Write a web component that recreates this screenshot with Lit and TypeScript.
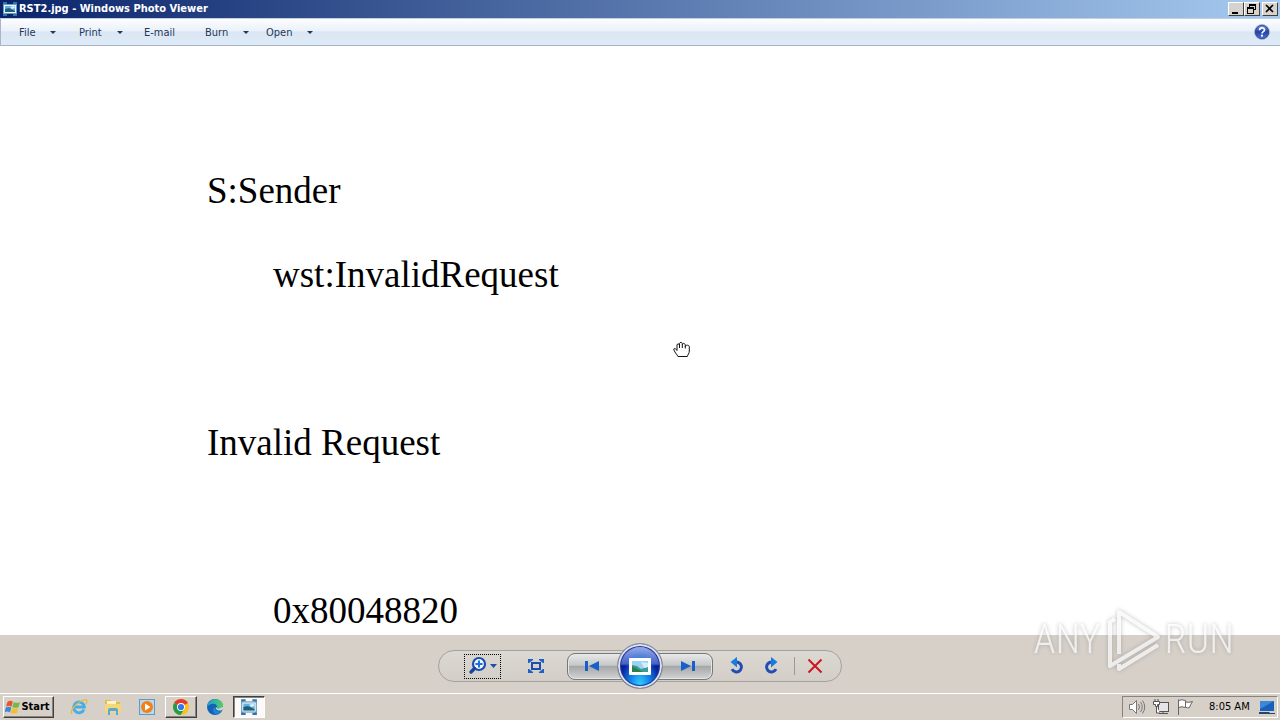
import { LitElement, html, css, svg } from "lit";
import { customElement } from "lit/decorators.js";

const photo = svg`<path d="M1 1h4v2H3v2H1zM15 1h-4v2h2v2h2zM1 15h4v-2H3v-2H1zM15 15h-4v-2h2v-2h2z" fill="#2f74ad"/>
  <rect x="1.500" y="3.500" width="13" height="9" fill="#eaf4fa" stroke="#6d9dbd"/>
  <rect x="3" y="5" width="10" height="6" fill="#5eb2e0"/><path d="M3 8l4-1 2 1 4 2v1H3z" fill="#215e7c"/><path d="M8 6l4-1 1 2-3 1z" fill="#d8f2fc"/>`;

const icons = {
  photo: svg`<svg width="16" height="16" viewBox="0 0 16 16">${photo}</svg>`,
  photoLarge: svg`<svg width="18" height="18" viewBox="0 0 16 16">${photo}</svg>`,
  minimize: svg`<svg width="14" height="12" viewBox="0 0 14 12"><path d="M3 9h6v2H3z"/></svg>`,
  restore: svg`<svg width="14" height="12" viewBox="0 0 14 12"><path d="M4 1h7v6H9V6h1V3H5v1H4z"/><path d="M2 4h7v7H2zM3 6v4h5V6z" fill-rule="evenodd"/></svg>`,
  close: svg`<svg width="14" height="12" viewBox="0 0 14 12"><path d="M3 2l7 7M10 2L3 9" stroke="#000" stroke-width="1.6"/></svg>`,
  help: svg`<svg width="18" height="18" viewBox="0 0 18 18"><defs><linearGradient id="h" x2="0" y2="1"><stop stop-color="#7a9be8"/><stop offset=".5" stop-color="#2440a8"/><stop offset="1" stop-color="#4a80dc"/></linearGradient></defs>
    <circle cx="9" cy="9" r="7.5" fill="url(#h)" stroke="#b4bdcf"/><circle cx="9" cy="9" r="6.7" fill="none" stroke="#33458f" stroke-width=".8"/>
    <path d="M6.600 7.200c0-3 4.900-3 4.900-.2C11.500 8.700 9 8.500 9 10.500" fill="none" stroke="#fff" stroke-width="1.700"/><circle cx="9" cy="12.700" r="1.100" fill="#fff"/></svg>`,
  zoom: svg`<svg width="30" height="20" viewBox="0 0 30 20"><circle cx="11" cy="8" r="6" fill="#eef5fc" stroke="#1b4fae" stroke-width="2.200"/><path d="M6.500 12.500L3 16" stroke="#16479f" stroke-width="3.400" stroke-linecap="round"/><path d="M11 4.500v7M7.500 8h7" stroke="#1672dc" stroke-width="2"/><path d="M22 8h7l-3.500 4z" fill="#1c4fae"/></svg>`,
  fit: svg`<svg width="16" height="14" viewBox="0 0 16 14"><rect x="4" y="4" width="8" height="6" fill="none" stroke="#1b4fae" stroke-width="2"/><path d="M0 0h5v1L1 4H0zM16 0h-5v1l4 3h1zM0 14h5v-1l-4-3H0zM16 14h-5v-1l4-3h1z" fill="#1c62c4"/></svg>`,
  prev: svg`<svg width="16" height="12" viewBox="0 0 16 12"><path d="M1 1h3v10H1zM15 1v10L5 6z" fill="#1760c8"/></svg>`,
  next: svg`<svg width="16" height="12" viewBox="0 0 16 12"><path d="M12 1h3v10h-3zM1 1v10l10-5z" fill="#1760c8"/></svg>`,
  show: svg`<svg width="22" height="18" viewBox="0 0 22 18"><rect width="22" height="17" y="1" rx="1" fill="#fff"/><rect x="3" y="4" width="16" height="11" fill="#9bd3f2"/><path d="M3 8l5 1 4 3 7-2v5H3z" fill="#3b9b9c"/><path d="M3 9l9 5 2 1H3z" fill="#2f8047"/><path d="M12 5l7 1v4l-4 1z" fill="#d2effb"/></svg>`,
  undo: svg`<svg width="16" height="18" viewBox="0 0 16 18"><path d="M6 5.200h3a5 5 0 1 1-6 7" fill="none" stroke="#214db0" stroke-width="3"/><path d="M8 0v10.500L1.500 5z" fill="#187be0"/></svg>`,
  redo: svg`<svg width="16" height="18" viewBox="0 0 16 18"><path d="M10 5.200H7a5 5 0 1 0 6 7" fill="none" stroke="#214db0" stroke-width="3"/><path d="M8 0v10.500L14.500 5z" fill="#187be0"/></svg>`,
  del: svg`<svg width="16" height="16" viewBox="0 0 16 16"><path d="M1.500 1.500l13 13M14.500 1.500l-13 13" stroke="#cc1622" stroke-width="2"/></svg>`,
  windows: svg`<svg width="16" height="16" viewBox="0 0 16 16"><path d="M2.500 3C4.500 1 6 1.500 7.800 2.600L6.500 7.700C4.500 6.300 3 6.500 1 7.500z" fill="#e5532b"/><path d="M8.700 3c2 1.300 4 1 6.300 0l-1.400 5c-2 1-4 1.300-6.200 0z" fill="#75b843"/><path d="M.9 8.400c2-1 3.500-1 5.400.2L5 13.500c-2-1.300-3.500-1.200-5.400-.2z" fill="#3d86d8"/><path d="M7.200 9c2 1.300 4 1 6.200 0L12 14c-2.200 1-4.200 1-6.200-.2z" fill="#f5bf2c"/></svg>`,
  ie: svg`<svg width="18" height="18" viewBox="0 0 18 18"><path d="M14 11.500a5.400 5.400 0 1 1 .4-2.500H5" fill="none" stroke="#43aee8" stroke-width="2.800"/><path d="M2 16C-1 13 7 4 14 2c4-1 3 2 2 4" fill="none" stroke="#e8b83f" stroke-width="1.300"/></svg>`,
  folder: svg`<svg width="18" height="18" viewBox="0 0 18 18"><path d="M1 2h6l1 2h8v9H1z" fill="#e5bb4c"/><path d="M3 3h9v3H3z" fill="#fff4c7"/><path d="M1 6h16v9H1z" fill="#f3d778"/><path d="M4 17v-5q0-2 2-2h6q2 0 2 2v5h-2v-4H6v4z" fill="#58a9d8"/></svg>`,
  media: svg`<svg width="18" height="18" viewBox="0 0 18 18"><rect x="1.500" y="1.500" width="15" height="15" fill="#b9d8ef" stroke="#5d9bc9"/><circle cx="9" cy="9" r="6" fill="#f18116"/><path d="M7 5.500v7L12.500 9z" fill="#fff"/></svg>`,
  chrome: svg`<svg width="18" height="18" viewBox="0 0 18 18"><circle cx="9" cy="9" r="8" fill="#fbc116"/><path d="M9 9L2.100 5A8 8 0 0 1 15.900 5z" fill="#e33b2e"/><path d="M9 9L2.100 5A8 8 0 0 0 8.500 17L13 10z" fill="#249b4b"/><circle cx="9" cy="9" r="4" fill="#fff"/><circle cx="9" cy="9" r="3.100" fill="#3478e5"/></svg>`,
  edge: svg`<svg width="18" height="18" viewBox="0 0 18 18"><defs><linearGradient id="e"><stop stop-color="#1c9bd8"/><stop offset="1" stop-color="#55cf62"/></linearGradient></defs><circle cx="9" cy="9" r="8" fill="#1262b5"/><path d="M1 9C2-1 17-1 17 8c0 4-5 4-6 2 1-5-6-6-10-1z" fill="url(#e)"/><path d="M9 9c0 4 4 5 7 3.500-1 2-3 3.500-5 4-5-1-5-6-2-7.500z" fill="#1b86cf"/><path d="M10 9c-1 3 3 4.500 6 3l2-2-2-1c-2 2-4 2-5 1z" fill="#d6d3ce"/></svg>`,
  sound: svg`<svg width="18" height="18" viewBox="0 0 18 18"><path d="M1.500 6.500h3l4-4v13l-4-4h-3z" fill="#fff" stroke="#777"/><path d="M10.500 6q2 3 0 6M12.500 4q3.500 5 0 10M14.500 2.500q4.500 6.500 0 13" fill="none" stroke="#777"/></svg>`,
  network: svg`<svg width="18" height="18" viewBox="0 0 18 18"><rect x="6.500" y="4.500" width="10" height="9" fill="#e5e5e5" stroke="#555"/><path d="M7 15.500h9M11 14v2" stroke="#555"/><path d="M1.500 3.500h6v3h-2v2h-2v-2h-2zM3 1v2M6 1v2M4.500 8v7H8" fill="#fff" stroke="#555"/></svg>`,
  flag: svg`<svg width="18" height="18" viewBox="0 0 18 18"><path d="M2.500 17V1.500M2.500 2.500q3.500-1.500 7 0v7q-3.500-1.500-7 0zM9.500 4q3 1 7-.5-2 3-3 6-2 1-4-.5" fill="#fff" stroke="#666"/></svg>`,
  desktop: svg`<svg width="16" height="16" viewBox="0 0 16 16"><path d="M1 2h14v10H1z" fill="#1761bd"/><path d="M1 2h14L1 10z" fill="#3b87d9"/><path d="M0 13h10l1 1h5v1H0z" fill="#284565"/></svg>`,
};

@customElement("app-root")
export class AppRoot extends LitElement {
  static styles = css`
    :host { display: flex; flex-direction: column; height: 100vh; position: relative; overflow: hidden;
      font: 11px/14px "DejaVu Sans Condensed", "DejaVu Sans", sans-serif; color: #000; background: #d6d0c9; }
    * { box-sizing: border-box; }
    button { font: inherit; color: inherit; background: none; border: 0; padding: 0; margin: 0; display: flex; align-items: center; justify-content: center; }
    svg { display: block; flex: none; }
    .title { display: flex; align-items: center; height: 19px; flex: none; padding: 0 2px; gap: 1px; color: #fff;
      background: linear-gradient(90deg, #0a246a, #a6caf0); border-bottom: 1px solid #c5d0df; }
    .title h1 { flex: 1; margin: 0; font: inherit; font-weight: bold; }
    .caption { display: flex; }
    .caption button { width: 16px; height: 14px; color: #000; background: #d6d3ce; border: 1px solid; border-color: #fff #404040 #404040 #fff; }
    .caption button:last-child { margin-left: 2px; }
    .menu { display: grid; grid-template-columns: 60px 65px 61px 61px 1fr auto; flex: none; height: 27px; padding: 0 9px 0 18px; align-items: center; color: #1e395b;
      border-left: 1px solid #a9b5cb; border-bottom: 1px solid #a5b3cc;
      background: linear-gradient(#fcfdff, #eaf1fa 45%, #dbe6f4 50%, #e0ebf8); }
    .item { justify-content: flex-start; gap: 15px; padding-top: 1px; }
    .item::after { content: ""; border: 3px solid transparent; border-top-color: #1e395b; border-bottom: 0; }
    .item.mail::after { display: none; }
    .canvas { flex: 1; min-height: 0; overflow: hidden; background: #fff; position: relative; }
    .canvas pre { margin: 0; padding: 124px 0 0 207px; font: 37px/42px "Liberation Serif", serif; }
    .indent { padding-left: 66px; }
    .hand { position: absolute; left: 673px; top: 295px; }
    .controls { flex: none; height: 58px; display: flex; justify-content: center; align-items: center; padding-top: 4px; background: #d6d0c9; }
    .pill { display: flex; align-items: center; width: 404px; height: 32px; padding-left: 25px; border: 1px solid #a5a29d; border-radius: 16px; background: linear-gradient(#dcd8d2, #d3cec7); }
    .zoom { width: 37px; height: 25px; border: 1px dotted #000; }
    .fit { width: 40px; height: 28px; margin: 0 11px 0 15px; }
    .nav { display: flex; align-items: center; width: 146px; margin-right: 7px; }
    .step { width: 60px; height: 27px; border: 1px solid #77787b; background: linear-gradient(#e9e9e9, #c6c7c8 45%, #a5a7aa 50%, #d4d4d3); box-shadow: inset 0 0 0 1px #e6e6e6; }
    .prev { border-radius: 8px 0 0 8px; padding-right: 10px; }
    .next { border-radius: 0 8px 8px 0; padding-left: 10px; }
    .show { position: relative; flex: none; width: 46px; height: 46px; margin: 0 -10px; border-radius: 50%; border: 1px solid #898b91;
      background: radial-gradient(ellipse at 50% 100%, #34dcff 0, #1488ea 30%, transparent 60%), linear-gradient(#a3b7ec, #4462c8 45%, #0a1c96 50%, #0a4fd0);
      box-shadow: inset 0 0 0 2px #dce1ec, inset 0 0 0 3px #22389b; }
    .tool { width: 34px; height: 28px; }
    .sep { width: 1px; height: 18px; margin: 0 3px 0 6px; background: #9c9993; }
    .taskbar { flex: none; height: 27px; display: flex; align-items: center; padding: 0 2px 0 3px; background: #d6d0c9; border-top: 1px solid #fff; }
    .start { width: 51px; height: 22px; margin-right: 9px; padding-right: 2px; font-weight: bold; }
    .raised { border: 1px solid; border-color: #fff #404040 #404040 #fff; box-shadow: inset -1px -1px #87847e; }
    .quick { display: flex; gap: 2px; }
    .quick button { width: 32px; height: 22px; }
    .quick .pressed { border: 1px solid; border-color: #404040 #fff #fff #404040; box-shadow: inset 1px 1px #87847e; background: #fbfaf9; }
    .tray { margin-left: auto; display: flex; align-items: center; width: 156px; height: 22px; padding: 0 1px 0 5px; border: 1px solid; border-color: #87847e #fff #fff #87847e; }
    .tray button { width: 18px; margin-right: 6px; }
    .tray time { margin-left: 9px; white-space: nowrap; }
    .tray .desk { margin: 0 0 0 auto; }
    .mark { position: absolute; right: 46px; bottom: 48px; display: flex; align-items: center; gap: 4px; color: #fffd;
      font: 300 40px/64px "Liberation Sans Narrow", "Roboto Condensed", Roboto, sans-serif; filter: drop-shadow(0 0 2px #777a); opacity: .8; pointer-events: none; }
  `;

  render() {
    return html`
      <header class="title">${icons.photo}<h1>RST2.jpg - Windows Photo Viewer</h1>
        <div class="caption"><button aria-label="Minimize">${icons.minimize}</button><button aria-label="Restore">${icons.restore}</button><button aria-label="Close">${icons.close}</button></div>
      </header>
      <nav class="menu">
        <button class="item">File</button><button class="item">Print</button><button class="item mail">E-mail</button><button class="item">Burn</button><button class="item">Open</button>
        <button aria-label="Help">${icons.help}</button>
      </nav>
      <main class="canvas"><pre>S:Sender

<span class="indent">wst:InvalidRequest</span>



Invalid Request



<span class="indent">0x80048820</span></pre>
        <svg class="hand" width="18" height="18" viewBox="0 0 18 18"><path d="M5 15.500C4 13.500 1 10.500.7 8c1-1.200 2.500 0 3.300 1.500V4c0-1.500 2.200-1.500 2.500 0V2.500c.3-1.500 2.500-1.500 2.800 0V4c.3-2 2.700-2 3 0v1.500c.5-1.700 4-2 4 .5v4c0 2.500-1.500 3.500-2 5.500z" fill="#fff" stroke="#111"/><path d="M6.500 4v3M9.300 4v3M12.300 5v2.500" stroke="#111"/></svg>
      </main>
      <section class="controls"><div class="pill">
        <button class="zoom" aria-label="Change display size">${icons.zoom}</button>
        <button class="fit" aria-label="Fit to window">${icons.fit}</button>
        <div class="nav"><button class="step prev" aria-label="Previous">${icons.prev}</button><button class="show" aria-label="Play slide show">${icons.show}</button><button class="step next" aria-label="Next">${icons.next}</button></div>
        <button class="tool" aria-label="Rotate counterclockwise">${icons.undo}</button><button class="tool" aria-label="Rotate clockwise">${icons.redo}</button>
        <span class="sep"></span><button class="tool" aria-label="Delete">${icons.del}</button>
      </div></section>
      <footer class="taskbar">
        <button class="start raised">${icons.windows}Start</button>
        <div class="quick">
          <button aria-label="Internet Explorer">${icons.ie}</button><button aria-label="Explorer">${icons.folder}</button><button aria-label="Media Player">${icons.media}</button>
          <button class="raised" aria-label="Chrome">${icons.chrome}</button><button aria-label="Edge">${icons.edge}</button><button class="pressed" aria-label="Photo Viewer">${icons.photoLarge}</button>
        </div>
        <div class="tray"><button aria-label="Volume">${icons.sound}</button><button aria-label="Network">${icons.network}</button><button aria-label="Action Center">${icons.flag}</button><time>8:05 AM</time><button class="desk" aria-label="Show desktop">${icons.desktop}</button></div>
      </footer>
      <div class="mark"><span>ANY</span><svg width="56" height="64" viewBox="0 0 56 64" fill="none" stroke="currentColor" stroke-width="4" stroke-linejoin="round"><path d="M14 46V4L53 29 5 58V14l5-3M14 56v5L53 37"/></svg><span>RUN</span></div>
    `;
  }
}
